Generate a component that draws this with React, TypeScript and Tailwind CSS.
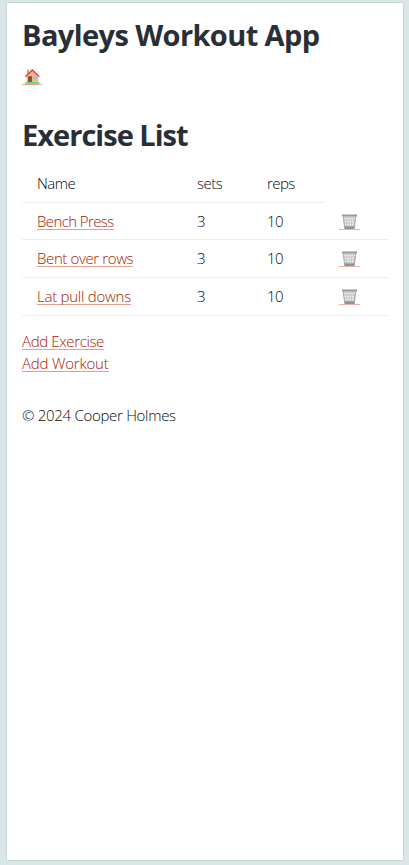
const exercises = [
  { name: 'Bench Press', tracking: 'tracking-[-0.6px]', height: 'h-[37px]' },
  { name: 'Bent over rows', tracking: 'tracking-[-0.38px]', height: 'h-[38px]' },
  { name: 'Lat pull downs', tracking: 'tracking-[-0.25px]', height: 'h-[38px]' },
];

const link = 'inline-block h-[20px] border-b border-[#e2a08c] text-[#a82000] leading-[22px] whitespace-nowrap';

function House() {
  return (
    <svg width="20" height="16" viewBox="0 0 20 16" className="block">
      <path d="M5 .5h2v5H5z" fill="#e8a878" />
      <path d="M4.5 7 10 1.500l6 5.500V14h-11.500z" fill="#f3bd79" />
      <path d="m3.300 7.800 7-6.800L17.300 7.800" fill="none" stroke="#ee3d43" strokeWidth="1.500" />
      <path d="M6 7.200h4V13H6z" fill="#885043" />
      <path d="M11.200 7.200h3.300v3.300h-3.300z" fill="#83c5f5" />
      <path d="M3.300 13h14V15h-14z" fill="#62df8d" />
    </svg>
  );
}

function Basket() {
  return (
    <svg width="21" height="15" viewBox="0 0 21 15" className="block">
      <path d="M4 2.500h13L15.500 14h-10z" fill="#c4c4c4" />
      <path d="M5 4.500h11M5.500 7.500h10M5.500 10.500h10" stroke="#f4f4f4" strokeWidth="1.400" strokeDasharray="1.500 1" />
      <path d="M6.200 6h9M6.200 9h9" stroke="#e8e8e8" strokeWidth="1" strokeDasharray="1 1.500" />
      <path d="M4.300 2.500 5.700 14M16.700 2.500 15.300 14" stroke="#aaa" fill="none" />
      <path d="M3 .500h15v2H3z" fill="#999" />
      <path d="M5.500 12.500h10v2.500h-10z" fill="#929292" />
    </svg>
  );
}

export default function App() {
  return (
    <div className="flex h-[865px] w-[409px] bg-[#d9e7e8] pt-[3px] pl-[7px] font-['Open_Sans','Noto_Sans',sans-serif] text-[15px] font-light text-[#050a10]">
      <main className="flex h-[857px] w-[396px] flex-col bg-white px-[15px] shadow-[0_0_2px_rgba(0,0,0,0.2)]">
        <h1 className="mt-[12px] h-[40px] text-[29px] leading-[40px] font-bold tracking-[-0.6px] whitespace-nowrap text-[#292f36]">Bayleys Workout App</h1>
        <a className="mt-[11px] h-[19px] w-5 border-b border-[#e5a592] pt-[3px]"><House /></a>
        <h2 className="mt-[30px] h-[40px] text-[29px] leading-[40px] font-bold tracking-[-0.98px] whitespace-nowrap text-[#292f36]">Exercise List</h2>
        <div className="mt-[10px] flex h-[38px] w-[302px] border-b border-[#ededf2] pt-[7px] pl-[15px] leading-[22px]">
          <span className="w-[160px] tracking-[-0.5px]">Name</span>
          <span className="w-[70px] tracking-[-0.5px]">sets</span>
          <span className="tracking-[-0.6px]">reps</span>
        </div>
        {exercises.map((e) => (
          <div key={e.name} className={`flex w-[366px] items-start border-b border-[#ededf2] pt-[7px] pl-[15px] leading-[22px] ${e.height}`}>
            <div className="w-[160px]"><a className={`${link} ${e.tracking}`}>{e.name}</a></div>
            <span className="w-[70px]">3</span>
            <span className="w-[72px] tracking-[-0.5px]">10</span>
            <a className="mt-[4px] h-[16px] w-[21px] border-b border-[#e5b5a8]"><Basket /></a>
          </div>
        ))}
        <div className="mt-[14px] h-[22px]"><a className={`${link} tracking-[-0.37px]`}>Add Exercise</a></div>
        <div className="h-[22px]"><a className={`${link} tracking-[-0.2px]`}>Add Workout</a></div>
        <footer className="mt-[30px] leading-[22px] tracking-[-0.3px] whitespace-nowrap">© 2024 Cooper Holmes</footer>
      </main>
    </div>
  );
}
